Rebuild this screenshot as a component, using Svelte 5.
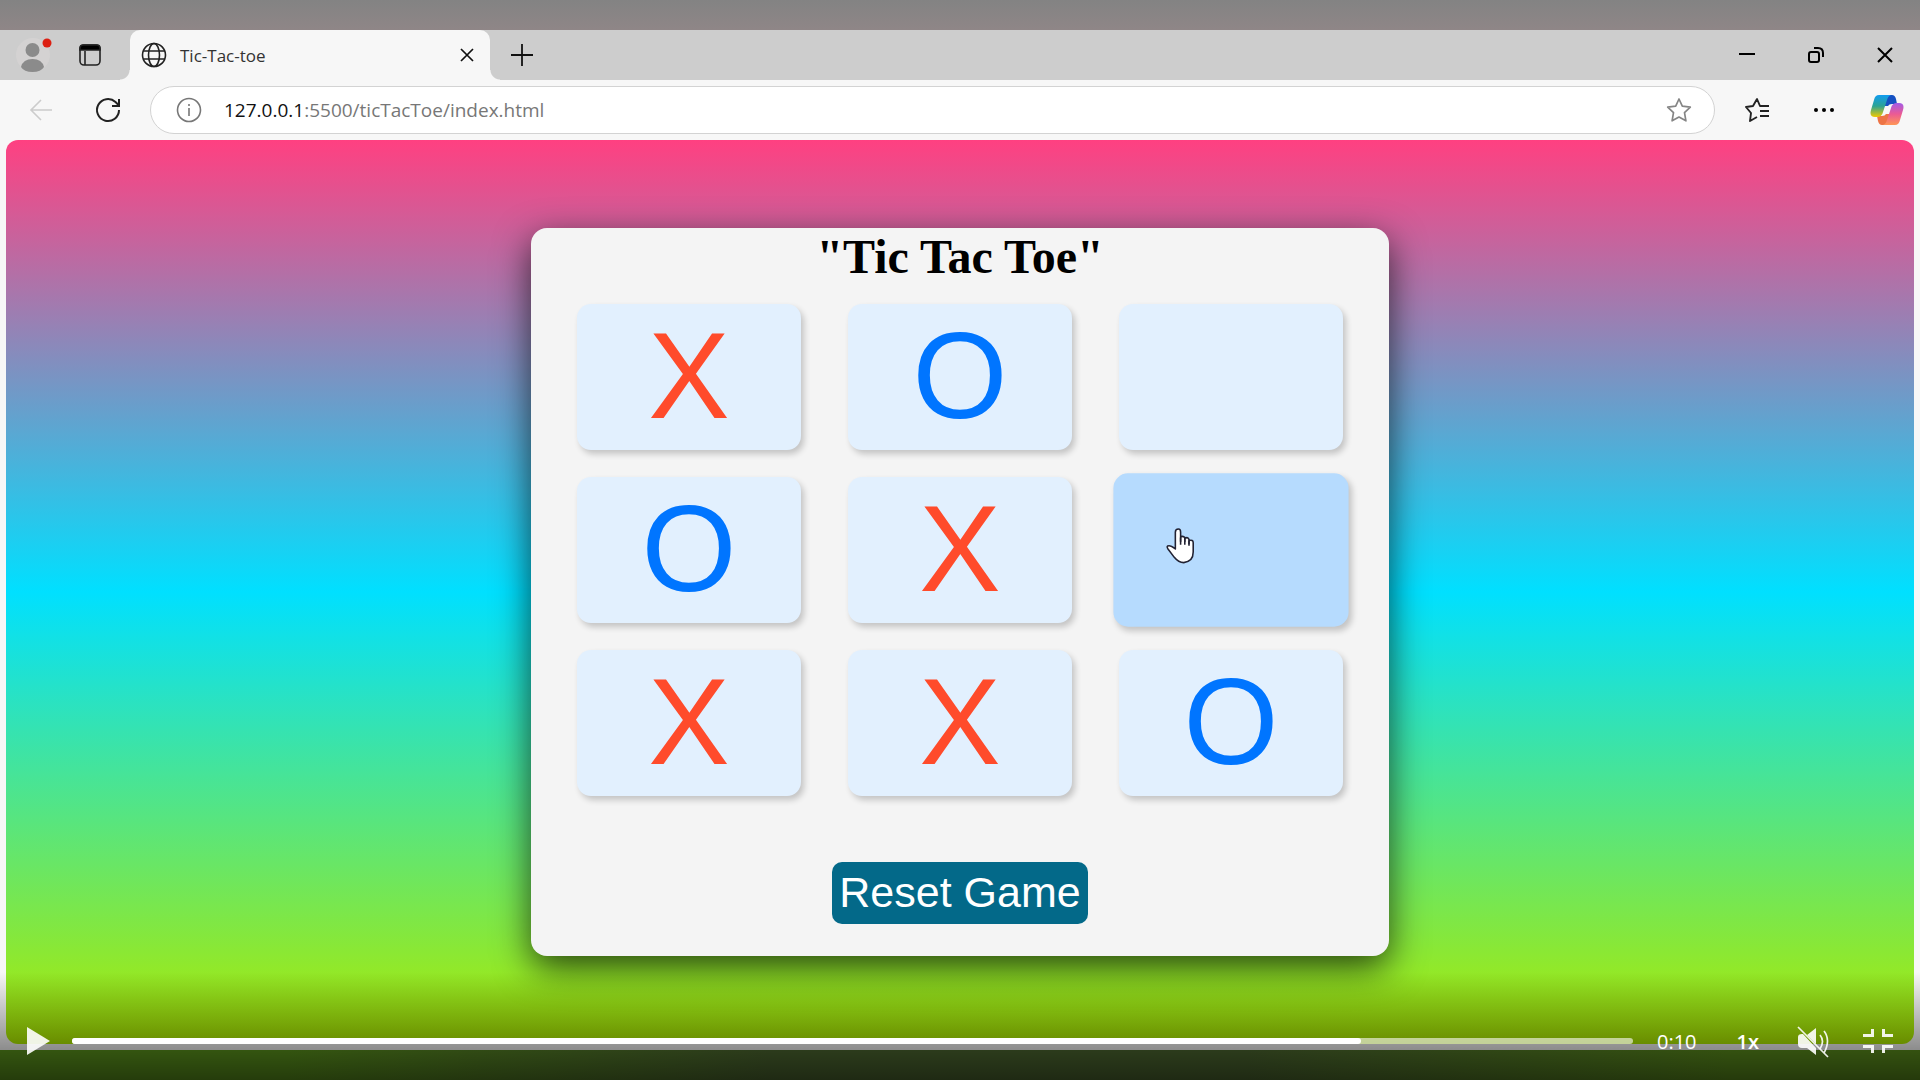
<script>
  const cells = ['X', 'O', '', 'O', 'X', '', 'X', 'X', 'O'];
</script>

<main class="player">
  <section class="browser">
    <header class="tabs">
      <button class="icon avatar" aria-label="Profile">
        <svg width="40" height="44" viewBox="0 0 40 44"><circle cx="19" cy="22" r="17" fill="#d4d2d2"/><circle cx="18.500" cy="17" r="7" fill="#8b8b8b"/><path d="M7 34q2-8 11.500-8T30 34q-3 5-11.500 5T7 34z" fill="#8b8b8b"/><circle cx="33" cy="10" r="4.500" fill="#dc1f12"/></svg>
      </button>
      <button class="icon workspaces" aria-label="Tab actions">
        <svg width="24" height="24" viewBox="0 0 24 24" fill="none" stroke="#222" stroke-width="1.600"><rect x="2" y="2" width="20" height="20" rx="4"/><path d="M2 7V5q0-3 3-3h14q3 0 3 3v2z" fill="#000"/><path d="M7 8v14"/></svg>
      </button>
      <div class="tab">
        <svg width="26" height="26" viewBox="0 0 26 26" fill="none" stroke="#222" stroke-width="1.600"><circle cx="13" cy="13" r="11.500"/><ellipse cx="13" cy="13" rx="5.500" ry="11.500"/><path d="M2.500 9h21M2.500 17h21"/></svg>
        <span class="title">Tic-Tac-toe</span>
        <button class="icon" aria-label="Close tab">
          <svg width="14" height="14" viewBox="0 0 14 14" stroke="#111" stroke-width="1.700"><path d="M1 1l12 12M13 1L1 13"/></svg>
        </button>
      </div>
      <button class="icon new" aria-label="New tab">
        <svg width="22" height="22" viewBox="0 0 22 22" stroke="#111" stroke-width="1.800"><path d="M11 0v22M0 11h22"/></svg>
      </button>
      <div class="window">
        <button class="icon" aria-label="Minimize"><svg width="18" height="18" viewBox="0 0 18 18" stroke="#000" stroke-width="2"><path d="M1 8h16"/></svg></button>
        <button class="icon" aria-label="Restore"><svg width="18" height="18" viewBox="0 0 18 18" fill="none" stroke="#000" stroke-width="2"><rect x="2" y="6" width="10" height="10" rx="2"/><path d="M7 2h4q5 0 5 5v4"/></svg></button>
        <button class="icon" aria-label="Close"><svg width="18" height="18" viewBox="0 0 18 18" stroke="#000" stroke-width="2"><path d="M2 2l14 14M16 2L2 16"/></svg></button>
      </div>
    </header>

    <nav class="toolbar">
      <button class="icon back" aria-label="Back"><svg width="24" height="24" viewBox="0 0 24 24" fill="none" stroke="#ccc" stroke-width="1.600"><path d="M23 12H2M12 2L2 12l10 10"/></svg></button>
      <button class="icon reload" aria-label="Reload"><svg width="28" height="28" viewBox="0 0 28 28" fill="none" stroke="#222" stroke-width="2"><path d="M25 14a11 11 0 1 1-3.500-8l3 3M25 3v7h-7"/></svg></button>
      <div class="address">
        <svg width="26" height="26" viewBox="0 0 26 26" fill="none" stroke="#777" stroke-width="1.600"><circle cx="13" cy="13" r="11.500"/><path d="M13 11v8M13 7v2"/></svg>
        <a class="url" href="http://127.0.0.1:5500/ticTacToe/index.html"><b>127.0.0.1</b>:5500/ticTacToe/index.html</a>
        <button class="icon" aria-label="Add to favorites"><svg width="26" height="26" viewBox="0 0 26 26" fill="none" stroke="#858585" stroke-width="1.700" stroke-linejoin="round"><path d="M13 2l3.300 7.200 8 1-5.800 5.500 1.400 8.100L13 20l-6.900 3.800 1.400-8.100-5.800-5.500 8-1z"/></svg></button>
      </div>
      <button class="icon favs" aria-label="Favorites"><svg width="26" height="26" viewBox="0 0 26 26" fill="none" stroke="#222" stroke-width="1.900" stroke-linejoin="round"><path d="M17 9h-1l-3-7-4 7-7 1 5 6-1 8 7-4M17 9h8M16 14h9M16 19h9"/></svg></button>
      <button class="icon more" aria-label="Settings and more"><svg width="22" height="6" viewBox="0 0 22 6"><circle cx="3" cy="3" r="2"/><circle cx="11" cy="3" r="2"/><circle cx="19" cy="3" r="2"/></svg></button>
      <button class="icon" aria-label="Copilot">
        <svg width="34" height="32" viewBox="0 0 34 32">
          <defs>
            <linearGradient id="left" x2="0" y2="1"><stop stop-color="#119cf0"/><stop offset=".5" stop-color="#2ba394"/><stop offset="1" stop-color="#f1c900"/></linearGradient>
            <linearGradient id="right" x2="0" y2="1"><stop stop-color="#a25be7"/><stop offset=".5" stop-color="#eb5a94"/><stop offset="1" stop-color="#ff9655"/></linearGradient>
          </defs>
          <path d="M16 1h6q3 0 4 4l1 5h-5q-3 0-4 2l-4 0z" fill="#1551c2"/>
          <path d="M18 31h-6q-3 0-4-4l-1-5h5q3 0 4-2h4z" fill="#ed7446"/>
          <path d="M9 1h12q-3 1-4 5l-4 12q-1 5-6 5H5q-6 0-4-7L4 6q1-5 5-5z" fill="url(#left)"/>
          <path d="M25 31H13q3-1 4-5l4-12q1-5 6-5h2q6 0 4 7l-3 10q-1 5-5 5z" fill="url(#right)"/>
        </svg>
      </button>
    </nav>

    <div class="page">
      <article class="card">
        <h1>"Tic Tac Toe"</h1>
        <div class="board">
          {#each cells as cell, i}
            <button class="cell" class:o={cell === 'O'} class:hover={i === 5} aria-label={cell ? undefined : 'Empty square'}>
              {cell}
              {#if i === 5}
                <svg class="cursor" width="28" height="36" viewBox="0 0 28 36" fill="#fff" stroke="#223" stroke-width="1.500" stroke-linejoin="round"><path d="M9 20V4q0-3 3-3 2 0 2 3v9V9q1-2 4 0v4-3q3-2 4 1v4-3q4-1 4 2v9q0 9-9 10-5 0-9-5l-6-8q-2-3 1-3 2 0 6 3z"/><path d="M14 9v7M18 10v6M22 12v5" fill="none"/></svg>
              {/if}
            </button>
          {/each}
        </div>
        <button class="reset">Reset Game</button>
      </article>
    </div>
  </section>

  <footer class="controls">
    <button class="icon" aria-label="Play"><svg width="23" height="28" viewBox="0 0 23 28" fill="#fff" fill-opacity=".9"><path d="M0 0l23 14L0 28z"/></svg></button>
    <progress max="1000" value="826" aria-label="Playback position"></progress>
    <time>0:10</time>
    <button class="icon speed">1x</button>
    <button class="icon mute" aria-label="Unmute"><svg width="32" height="32" viewBox="0 0 32 32" fill="#fff" fill-opacity=".9"><path d="M1 11q0-3 4-3h1l13 14v7l-9-7H5q-4 0-4-4zM10 9l9-7v16z"/><path d="M23 9q5 6 0 14M27 5q7 9 0 22M1 1l30 30" fill="none" stroke="#fff" stroke-opacity=".9" stroke-width="1.700"/></svg></button>
    <button class="icon" aria-label="Exit full screen"><svg width="30" height="24" viewBox="0 0 30 24" fill="none" stroke="#fff" stroke-opacity=".9" stroke-width="3"><path d="M0 6.500h9.500V0M30 6.500h-9.500V0M0 17.500h9.500V24M30 17.500h-9.500V24"/></svg></button>
  </footer>
</main>

<style>
  :global(body) { margin: 0; }
  .player {
    position: relative;
    box-sizing: border-box;
    min-height: 100vh;
    padding: 30px 0;
    display: flex;
    flex-direction: column;
    background:
      linear-gradient(#838383, #8f8687) top / 100% 30px no-repeat,
      linear-gradient(90deg, #5c961c 15%, #4d6830 40%, #4d6830 65%, #5c901c 90%);
    font-family: "Open Sans", "Noto Sans", sans-serif;
  }
  button { font: inherit; cursor: pointer; }
  svg { display: block; flex: none; }
  .icon { display: grid; place-items: center; padding: 0; border: 0; background: none; color: inherit; }
  .browser { flex: 1; display: flex; flex-direction: column; background: #f7f7f7; }
  .tabs { height: 50px; display: flex; align-items: center; background: #cdcdcd; }
  .avatar { margin-left: 14px; }
  .workspaces { margin-left: 24px; }
  .tab {
    position: relative;
    align-self: stretch;
    width: 360px;
    margin-left: 28px;
    padding: 0 16px 0 11px;
    box-sizing: border-box;
    display: flex;
    align-items: center;
    gap: 13px;
    border-radius: 10px 10px 0 0;
    background: #f7f7f7;
  }
  .tab::before,
  .tab::after {
    content: "";
    position: absolute;
    bottom: 0;
    width: 10px;
    height: 10px;
  }
  .tab::before { right: 100%; background: radial-gradient(circle at 0 0, #cdcdcd 9px, #f7f7f7 10px); }
  .tab::after { left: 100%; background: radial-gradient(circle at 100% 0, #cdcdcd 9px, #f7f7f7 10px); }
  .title { flex: 1; font-size: 17px; color: #333; }
  .new { margin-left: 21px; }
  .window { margin-left: auto; margin-right: 26px; display: flex; gap: 51px; }
  .toolbar { height: 60px; padding: 0 16px 0 29px; display: flex; align-items: center; }
  .reload { margin-left: 41px; }
  .address {
    flex: 1;
    height: 46px;
    margin: 0 29px 0 28px;
    padding: 0 22px 0 25px;
    display: flex;
    align-items: center;
    border: 1px solid #d3d3d3;
    border-radius: 24px;
    background: #fff;
  }
  .url { flex: 1; margin-left: 22px; font-size: 19px; color: #777; text-decoration: none; }
  .url b { font-weight: 400; color: #111; }
  .more { margin: 0 35px 0 43px; }
  .page {
    flex: 1;
    margin: 0 6px 6px;
    display: grid;
    place-items: start center;
    border-radius: 12px;
    background: linear-gradient(#ff4081, #00e0ff 50%, #aeea00);
  }
  .card {
    width: 858px;
    height: 728px;
    margin-top: 88px;
    box-sizing: border-box;
    display: flex;
    flex-direction: column;
    align-items: center;
    border-radius: 16px;
    background: #f4f4f4;
    box-shadow: 0 12px 36px rgba(0, 0, 0, 0.7);
  }
  h1 { margin: 0 0 19px; font: 700 48px/57px "Liberation Serif", serif; color: #000; }
  .board { display: grid; grid-template-columns: repeat(3, 224px); grid-auto-rows: 146px; gap: 27px 47px; }
  .cell {
    position: relative;
    padding: 0 0 2px;
    border: 0;
    border-radius: 14px;
    background: #e2f0fe;
    box-shadow: 3px 4px 6px rgba(0, 0, 0, 0.2);
    color: #ff4b2b;
    font: 122px/144px "Liberation Sans", sans-serif;
  }
  .cell.o { color: #0075ff; }
  .cell.hover { transform: scale(1.05); background: #b6dbfe; }
  .cursor { position: absolute; left: 50px; top: 52px; }
  .reset {
    margin-top: 66px;
    height: 62px;
    padding: 0 7px 2px;
    border: 0;
    border-radius: 10px;
    background: #036989;
    color: #fff;
    font: 43px/60px "Liberation Sans", sans-serif;
  }
  .controls {
    position: absolute;
    inset: auto 0 0;
    height: 108px;
    padding: 0 27px 24px;
    box-sizing: border-box;
    display: flex;
    align-items: flex-end;
    background: linear-gradient(transparent, rgba(0, 0, 0, 0.6));
    color: #fff;
    font-size: 20px;
  }
  .controls > * { height: 30px; line-height: 32px; }
  progress {
    appearance: none;
    flex: 1;
    margin-left: 22px;
    padding: 12px 0;
    box-sizing: border-box;
    border: 0;
    background: none;
  }
  progress::-webkit-progress-bar { border-radius: 3px; background: rgba(255, 255, 255, 0.6); }
  progress::-webkit-progress-value { border-radius: 3px; background: #fff; }
  time { margin-left: 24px; }
  .speed { margin-left: 40px; font-weight: 600; }
  .mute { margin: 0 34px 0 38px; }
</style>
